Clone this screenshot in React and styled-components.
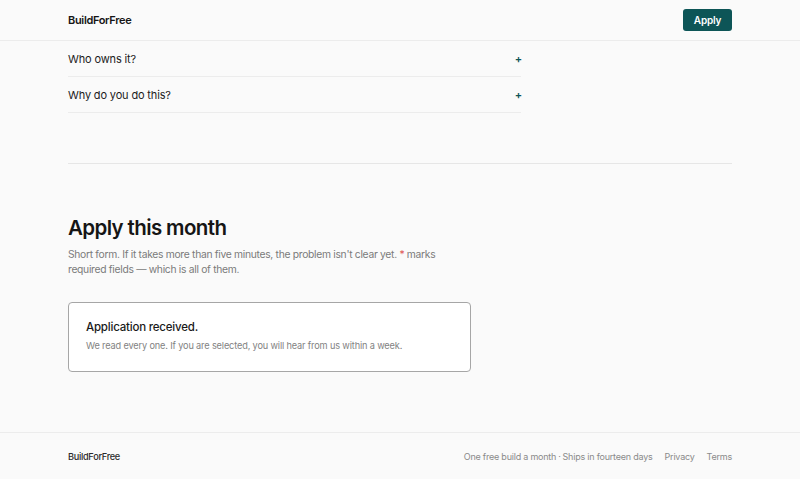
import styled, { createGlobalStyle } from "styled-components";

const GlobalStyle = createGlobalStyle`
  * { box-sizing: border-box; }
  body {
    margin: 0;
    background: #fafafa;
    font-family: Inter, "Noto Sans", sans-serif;
    color: #151515;
  }
`;

const Page = styled.div`
  min-height: 479px;
  display: flex;
  flex-direction: column;
`;

const Wrapper = styled.div`
  width: 664px;
  margin: 0 auto;
`;

const Header = styled.header`
  border-bottom: 1px solid #ececec;

  .bar {
    height: 40px;
    display: flex;
    align-items: center;
    justify-content: space-between;
  }
`;

const Logo = styled.div`
  font-size: ${(p) => (p.$light ? "9.2px" : "11px")};
  font-weight: ${(p) => (p.$light ? 500 : 600)};
  letter-spacing: ${(p) => (p.$light ? "-0.3px" : "-0.33px")};
  color: ${(p) => (p.$light ? "#2a2a2a" : "#151515")};
`;

const Button = styled.button`
  background: #0d5557;
  color: white;
  border: none;
  border-radius: 3px;
  height: 22px;
  width: 49px;
  font-family: inherit;
  font-size: 10px;
  font-weight: 600;
  letter-spacing: -0.2px;
  cursor: pointer;
`;

const Faq = styled.ul`
  list-style: none;
  margin: 0;
  padding: 0;
  width: 453px;
`;

const FaqRow = styled.li`
  height: 36px;
  display: flex;
  align-items: center;
  justify-content: space-between;
  border-bottom: 1px solid #ececec;
  font-size: 11px;
  letter-spacing: -0.15px;
  color: #1c1c1c;

  span.plus {
    color: #0d5557;
    font-size: 11px;
    font-weight: 600;
    margin-right: -1px;
  }
`;

const Divider = styled.hr`
  border: none;
  border-top: 1px solid #e6e6e6;
  margin: 50px 0 0;
`;

const ApplySection = styled.section`
  padding: 51px 0 40px;

  h2 {
    margin: 0;
    font-size: 20.5px;
    font-weight: 600;
    letter-spacing: -0.03em;
    line-height: 26px;
  }

  p.lead {
    margin: 6px 0 0;
    max-width: 385px;
    font-size: 10.3px;
    letter-spacing: -0.3px;
    line-height: 15px;
    color: #7a7a7a;
  }

  .req {
    color: #e06060;
  }
`;

const Notice = styled.div`
  margin-top: 25px;
  width: 403px;
  height: 70px;
  background: #fff;
  border: 1px solid #a6a6a6;
  border-radius: 4px;
  padding: 17px 17px;

  h3 {
    margin: 0;
    font-size: 11.5px;
    letter-spacing: -0.2px;
    font-weight: 500;
    color: #1a1a1a;
  }

  p {
    margin: 6px 0 0;
    font-size: 9.2px;
    letter-spacing: -0.15px;
    color: #828282;
  }
`;

const Footer = styled.footer`
  margin-top: auto;
  border-top: 1px solid #ececec;

  .bar {
    height: 46px;
    display: flex;
    align-items: center;
    justify-content: space-between;
  }
`;

const FooterLinks = styled.nav`
  display: flex;
  gap: 12px;
  font-size: 9px;
  letter-spacing: -0.22px;
  color: #8a8a8a;
`;

const Dot = styled.span`
  margin: 0 2px;
`;

const faqs = ["Who owns it?", "Why do you do this?"];

export default function App() {
  return (
    <Page>
      <GlobalStyle />
      <Header>
        <Wrapper className="bar">
          <Logo>BuildForFree</Logo>
          <Button>Apply</Button>
        </Wrapper>
      </Header>

      <Wrapper>
        <Faq>
          {faqs.map((q) => (
            <FaqRow key={q}>
              <span>{q}</span>
              <span className="plus">+</span>
            </FaqRow>
          ))}
        </Faq>
        <Divider />

        <ApplySection>
          <h2>Apply this month</h2>
          <p className="lead">
            Short form. If it takes more than five minutes, the problem isn't
            clear yet. <span className="req">*</span> marks required fields —
            which is all of them.
          </p>
          <Notice>
            <h3>Application received.</h3>
            <p>
              We read every one. If you are selected, you will hear from us
              within a week.
            </p>
          </Notice>
        </ApplySection>
      </Wrapper>

      <Footer>
        <Wrapper className="bar">
          <Logo $light>BuildForFree</Logo>
          <FooterLinks>
            <span>
              One free build a month<Dot>·</Dot>Ships in fourteen days
            </span>
            <span>Privacy</span>
            <span>Terms</span>
          </FooterLinks>
        </Wrapper>
      </Footer>
    </Page>
  );
}
